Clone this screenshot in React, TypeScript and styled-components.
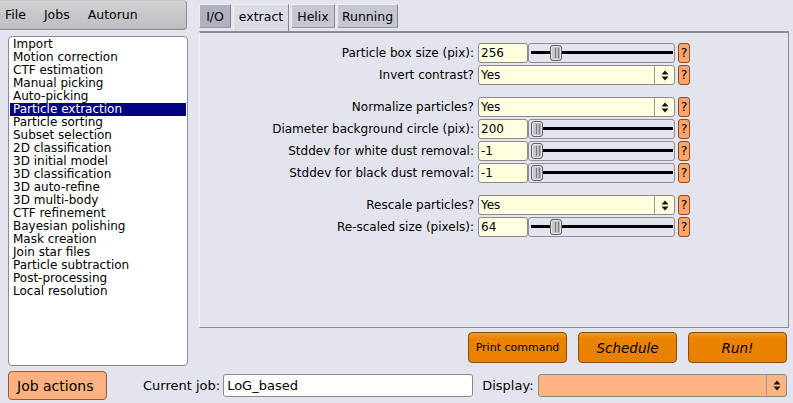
import React from "react";
import styled, { createGlobalStyle, css } from "styled-components";

const GlobalStyle = createGlobalStyle`
  html, body { margin: 0; padding: 0; background: #e4e4ee; }
  body {
    font-family: "DejaVu Sans", "Liberation Sans", sans-serif;
    font-size: 12px;
    color: #000;
  }
  * { box-sizing: border-box; }
`;

const Page = styled.div`
  width: 793px;
  height: 403px;
  overflow: hidden;
  display: grid;
  grid-template-columns: 188px 1fr;
  grid-template-rows: 366px 1fr;
  background: #e4e4ee;
`;

const LeftColumn = styled.div`
  display: flex;
  flex-direction: column;
`;

const MenuBar = styled.div`
  width: 187px;
  height: 30px;
  display: flex;
  align-items: center;
  gap: 18px;
  padding-left: 5px;
  padding-bottom: 1px;
  background: linear-gradient(#d2d2d4, #bebec0);
  border: 1px solid #8a8a8c;
  border-top-color: #c8c8ca;
  border-left: none;
  border-radius: 0 4px 4px 0;
  font-size: 12.5px;
`;

const MenuItem = styled.span`
  color: #000;
`;

const JobList = styled.div`
  margin: 6px 0 0 8px;
  height: 330px;
  background: #fff;
  border: 1px solid #8a8a90;
  border-radius: 4px;
  padding: 1px 1px;
`;

const JobItem = styled.div<{ $selected?: boolean }>`
  height: 13px;
  line-height: 13px;
  padding-left: 3px;
  font-size: 12px;
  white-space: nowrap;
  ${(p) =>
    p.$selected &&
    css`
      background: #000080;
      color: #fff;
    `}
`;

const RightColumn = styled.div`
  display: flex;
  flex-direction: column;
  padding-top: 4px;
`;

const TabBar = styled.div`
  display: flex;
  align-items: flex-start;
  gap: 2px;
  height: 27px;
  margin-left: 11px;
`;

const Tab = styled.div<{ $active?: boolean; $dark?: boolean; $w: number }>`
  width: ${(p) => p.$w}px;
  height: ${(p) => (p.$active ? 27 : 24)}px;
  display: flex;
  align-items: center;
  justify-content: center;
  padding-bottom: ${(p) => (p.$active ? 3 : 0)}px;
  font-size: 12.5px;
  background: ${(p) => (p.$active ? "#dcdce6" : p.$dark ? "#b0b0c0" : "#c6c6d0")};
  border-top: 1px solid #ececf4;
  border-left: 1px solid #ececf4;
  border-right: 1px solid #85858f;
  ${(p) =>
    !p.$active &&
    css`
      border-bottom: 1px solid #9a9aa4;
    `}
`;

const Panel = styled.div`
  margin-left: 11px;
  width: 590px;
  height: 297px;
  border-top: 2px solid #8e8e96;
  border-right: 1px solid #8a8a92;
  border-bottom: 1px solid #8a8a92;
  border-left: 1px solid #f2f2f8;
  padding-top: 10px;
  display: flex;
  flex-direction: column;
`;

const FormRow = styled.div`
  display: grid;
  grid-template-columns: 274px 197px 12px;
  column-gap: 4px;
  height: 20px;
  margin-bottom: 2px;
  & > :last-child {
    margin-left: -1px;
  }
`;

const Spacer = styled.div`
  height: 10px;
`;

const FieldLabel = styled.label`
  text-align: right;
  line-height: 20px;
  white-space: nowrap;
  font-size: 12px;
`;

const NumberGroup = styled.div`
  display: flex;
  height: 20px;
`;

const ValueInput = styled.div`
  width: 50px;
  height: 20px;
  background: #ffffe0;
  border: 1px solid #8a8a8a;
  border-radius: 3px;
  padding-left: 2px;
  line-height: 18px;
  font-size: 12px;
`;

const SliderTrack = styled.div`
  position: relative;
  flex: 1;
  height: 20px;
  border: 1px solid #8e8e98;
  border-radius: 3px;
  background: #e4e4ee;
  &::before {
    content: "";
    position: absolute;
    left: 2px;
    right: 1px;
    top: 7px;
    height: 3px;
    background: #000;
  }
`;

const SliderThumb = styled.div`
  position: absolute;
  top: 1px;
  width: 12px;
  height: 16px;
  border: 1px solid #5e5e62;
  border-radius: 3px;
  background: linear-gradient(90deg, #cfcfd2, #b4b4b8);
  box-shadow: inset 0 0 0 1px #e6e6ea;
  &::after {
    content: "";
    position: absolute;
    left: 4px;
    top: 2px;
    width: 2px;
    bottom: 2px;
    border-left: 1px solid #7a7a80;
    border-right: 1px solid #7a7a80;
  }
`;

const ChoiceBox = styled.div<{ $bg: string; $size: number }>`
  display: flex;
  align-items: stretch;
  height: 100%;
  background: ${(p) => p.$bg};
  border: 1px solid #8a8a8a;
  border-radius: 3px;
  font-size: ${(p) => p.$size}px;
`;

const ChoiceText = styled.div`
  flex: 1;
  padding-left: 2px;
  display: flex;
  align-items: center;
`;

const ChoiceArrows = styled.div`
  width: 20px;
  border-left: 1px solid #9a9a9a;
  display: flex;
  align-items: center;
  justify-content: center;
`;

const HelpButton = styled.div`
  width: 12px;
  height: 20px;
  background: #ffa56b;
  border: 1px solid #8a4a20;
  border-radius: 3px;
  font-size: 12.5px;
  line-height: 18px;
  text-align: center;
`;

const ActionRow = styled.div`
  display: flex;
  justify-content: flex-end;
  gap: 11px;
  margin-top: 4px;
  padding-right: 6px;
`;

const ActionButton = styled.div<{ $italic?: boolean }>`
  width: 99px;
  height: 31px;
  display: flex;
  align-items: center;
  justify-content: center;
  background: linear-gradient(#f29a2c 0%, #ea8400 18%, #e88000 100%);
  border: 1px solid #8c4c00;
  border-radius: 4px;
  ${(p) =>
    p.$italic
      ? css`
          font-style: italic;
          font-size: 13.5px;
        `
      : css`
          font-size: 11px;
        `}
`;

const BottomRow = styled.div`
  grid-column: 1 / -1;
  display: flex;
  align-items: flex-start;
  padding: 5px 6px 0 8px;
`;

const JobActions = styled.div`
  width: 99px;
  height: 29px;
  background: #ffb27f;
  border: 1px solid #9a5a30;
  border-radius: 4px;
  font-size: 14px;
  display: flex;
  align-items: center;
  padding-left: 8px;
`;

const InlineLabel = styled.span<{ $gap: number }>`
  margin-left: ${(p) => p.$gap}px;
  margin-top: 3px;
  line-height: 23px;
  font-size: 13px;
  white-space: nowrap;
`;

const JobNameInput = styled.div`
  margin-left: 3px;
  margin-top: 3px;
  width: 250px;
  height: 23px;
  background: #fff;
  border: 1px solid #8a8a8a;
  border-radius: 3px;
  padding-left: 3px;
  line-height: 21px;
  font-size: 13px;
`;

const DisplaySlot = styled.div`
  margin-left: 4px;
  margin-top: 3px;
  flex: 1;
  height: 23px;
`;

const UpDown = () => (
  <svg width="8" height="11" viewBox="0 0 8 11">
    <polygon points="0.5,4.5 4,0.5 7.5,4.5" fill="#111" />
    <polygon points="0.5,6.5 4,10.5 7.5,6.5" fill="#111" />
  </svg>
);

const Choice = ({ value, bg = "#ffffe0", size = 12 }: { value: string; bg?: string; size?: number }) => (
  <ChoiceBox $bg={bg} $size={size}>
    <ChoiceText>{value}</ChoiceText>
    <ChoiceArrows>
      <UpDown />
    </ChoiceArrows>
  </ChoiceBox>
);

type Field =
  | { kind: "slider"; label: string; value: string; thumb: number }
  | { kind: "choice"; label: string; value: string }
  | { kind: "gap" };

const fields: Field[] = [
  { kind: "slider", label: "Particle box size (pix):", value: "256", thumb: 21 },
  { kind: "choice", label: "Invert contrast?", value: "Yes" },
  { kind: "gap" },
  { kind: "choice", label: "Normalize particles?", value: "Yes" },
  { kind: "slider", label: "Diameter background circle (pix):", value: "200", thumb: 2 },
  { kind: "slider", label: "Stddev for white dust removal:", value: "-1", thumb: 2 },
  { kind: "slider", label: "Stddev for black dust removal:", value: "-1", thumb: 2 },
  { kind: "gap" },
  { kind: "choice", label: "Rescale particles?", value: "Yes" },
  { kind: "slider", label: "Re-scaled size (pixels):", value: "64", thumb: 21 },
];

const jobs = [
  "Import",
  "Motion correction",
  "CTF estimation",
  "Manual picking",
  "Auto-picking",
  "Particle extraction",
  "Particle sorting",
  "Subset selection",
  "2D classification",
  "3D initial model",
  "3D classification",
  "3D auto-refine",
  "3D multi-body",
  "CTF refinement",
  "Bayesian polishing",
  "Mask creation",
  "Join star files",
  "Particle subtraction",
  "Post-processing",
  "Local resolution",
];

export default function App() {
  return (
    <>
      <GlobalStyle />
      <Page>
        <LeftColumn>
          <MenuBar>
            <MenuItem>File</MenuItem>
            <MenuItem>Jobs</MenuItem>
            <MenuItem>Autorun</MenuItem>
          </MenuBar>
          <JobList>
            {jobs.map((j) => (
              <JobItem key={j} $selected={j === "Particle extraction"}>
                {j}
              </JobItem>
            ))}
          </JobList>
        </LeftColumn>
        <RightColumn>
          <TabBar>
            <Tab $w={32} $dark>I/O</Tab>
            <Tab $w={56} $active>extract</Tab>
            <Tab $w={44}>Helix</Tab>
            <Tab $w={61}>Running</Tab>
          </TabBar>
          <Panel>
            {fields.map((f, i) =>
              f.kind === "gap" ? (
                <Spacer key={i} />
              ) : (
                <FormRow key={i}>
                  <FieldLabel>{f.label}</FieldLabel>
                  {f.kind === "slider" ? (
                    <NumberGroup>
                      <ValueInput>{f.value}</ValueInput>
                      <SliderTrack>
                        <SliderThumb style={{ left: f.thumb }} />
                      </SliderTrack>
                    </NumberGroup>
                  ) : (
                    <Choice value={f.value} />
                  )}
                  <HelpButton>?</HelpButton>
                </FormRow>
              )
            )}
          </Panel>
          <ActionRow>
            <ActionButton>Print command</ActionButton>
            <ActionButton $italic>Schedule</ActionButton>
            <ActionButton $italic>Run!</ActionButton>
          </ActionRow>
        </RightColumn>
        <BottomRow>
          <JobActions>Job actions</JobActions>
          <InlineLabel $gap={36}>Current job:</InlineLabel>
          <JobNameInput>LoG_based</JobNameInput>
          <InlineLabel $gap={9}>Display:</InlineLabel>
          <DisplaySlot>
            <Choice value="" bg="#ffb482" size={13} />
          </DisplaySlot>
        </BottomRow>
      </Page>
    </>
  );
}
